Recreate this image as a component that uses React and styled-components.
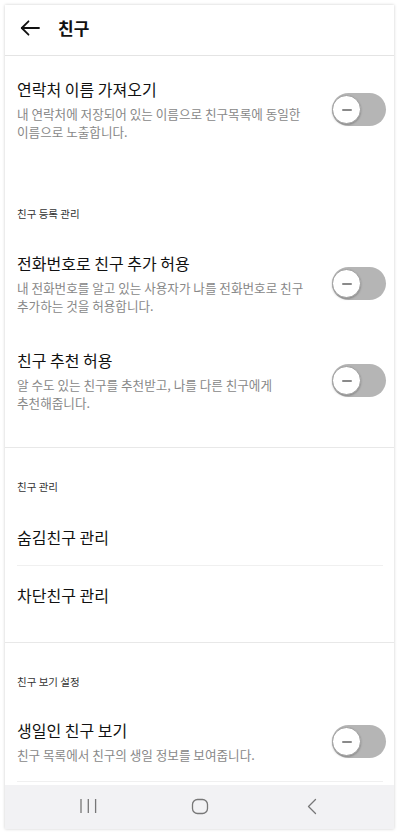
import React from "react";
import styled, { createGlobalStyle } from "styled-components";

const Global = createGlobalStyle`
  html, body { margin: 0; padding: 0; background: #ffffff; }
  body { font-family: "Noto Sans CJK KR", "Noto Sans", sans-serif; -webkit-font-smoothing: antialiased; }
  * { box-sizing: border-box; }
`;

const Page = styled.div`
  padding: 5px 6px 0 5px;
  height: 834px;
  overflow: hidden;
`;

const Card = styled.div`
  height: 824px;
  background: #fff;
  box-shadow: 0 0 3px rgba(0, 0, 0, 0.2);
  display: flex;
  flex-direction: column;
  overflow: hidden;
`;

const Header = styled.div`
  height: 51px;
  flex: none;
  display: flex;
  align-items: center;
  padding: 0 0 5px 15px;
  border-bottom: 1px solid #e4e4e4;
`;

const BackBtn = styled.div`
  width: 20px;
  height: 16px;
  display: flex;
  color: #111;
`;

const Title = styled.div`
  margin-left: 18px;
  font-size: 17px;
  font-weight: 700;
  color: #111;
  line-height: 22px;
`;

const Content = styled.div`
  flex: 1;
  overflow: hidden;
`;

const Group = styled.div`
  padding-top: ${(p) => p.$pt || 0}px;
  padding-bottom: ${(p) => p.$pb || 0}px;
  border-bottom: ${(p) => (p.$divider ? "1px solid #e8e8e8" : "none")};
`;

const Label = styled.div`
  padding: ${(p) => p.$pt}px 12px ${(p) => p.$pb}px 12px;
  font-size: 10.5px;
  line-height: 16px;
  color: #333;
`;

const Row = styled.div`
  display: flex;
  align-items: center;
  padding: 17px 8px 17px 12px;
`;

const Texts = styled.div`
  flex: 1;
  padding-right: 20px;
`;

const RowTitle = styled.div`
  font-size: 16px;
  line-height: 22px;
  color: #111;
`;

const Desc = styled.div`
  margin-top: 5px;
  font-size: 12.6px;
  line-height: 18px;
  color: #888;
  white-space: nowrap;
`;

const Track = styled.div`
  position: relative;
  flex: none;
  width: 54px;
  height: 33px;
  border-radius: 17px;
  background: #b5b5b5;
`;

const Knob = styled.div`
  position: absolute;
  left: 0;
  top: 2px;
  width: 29px;
  height: 29px;
  border-radius: 50%;
  background: #fff;
  border: 1px solid #9e9e9e;
  box-shadow: 0 1px 2px rgba(0, 0, 0, 0.25);
  display: flex;
  align-items: center;
  justify-content: center;
  &::after {
    content: "";
    width: 10px;
    height: 2px;
    border-radius: 1px;
    background: #8a8a8a;
  }
`;

const Item = styled.div`
  height: 57px;
  display: flex;
  align-items: center;
  margin: 0 11px 0 12px;
  font-size: 16px;
  color: #111;
  border-bottom: ${(p) => (p.$line ? "1px solid #f0f0f0" : "none")};
`;

const InnerLine = styled.div`
  margin: 0 11px 0 12px;
  border-bottom: 1px solid #f0f0f0;
`;

const Nav = styled.div`
  height: 44px;
  flex: none;
  background: #f2f2f4;
  display: grid;
  grid-template-columns: repeat(3, 112px);
  justify-content: center;
  align-items: center;
  justify-items: center;
  padding: 0 0 2px 0;
`;

const Toggle = () => (
  <Track>
    <Knob />
  </Track>
);

const ToggleRow = ({ title, desc }) => (
  <Row>
    <Texts>
      <RowTitle>{title}</RowTitle>
      <Desc>{desc}</Desc>
    </Texts>
    <Toggle />
  </Row>
);

export default function App() {
  return (
    <>
      <Global />
      <Page>
        <Card>
          <Header>
            <BackBtn>
              <svg width="20" height="16" viewBox="0 0 20 16" fill="none" stroke="currentColor" strokeWidth="1.8" strokeLinecap="round" strokeLinejoin="round">
                <path d="M19 8H1.8" />
                <path d="M8.5 1.3L1.8 8l6.7 6.7" />
              </svg>
            </BackBtn>
            <Title>친구</Title>
          </Header>
          <Content>
            <Group $pt={5} $pb={17}>
              <ToggleRow
                title="연락처 이름 가져오기"
                desc={<>내 연락처에 저장되어 있는 이름으로 친구목록에 동일한<br />이름으로 노출합니다.</>}
              />
            </Group>
            <Group $pb={18} $divider>
              <Label $pt={31} $pb={13}>친구 등록 관리</Label>
              <ToggleRow
                title="전화번호로 친구 추가 허용"
                desc={<>내 전화번호를 알고 있는 사용자가 나를 전화번호로 친구<br />추가하는 것을 허용합니다.</>}
              />
              <ToggleRow
                title="친구 추천 허용"
                desc={<>알 수도 있는 친구를 추천받고, 나를 다른 친구에게<br />추천해줍니다.</>}
              />
            </Group>
            <Group $pb={19} $divider>
              <Label $pt={31} $pb={14}>친구 관리</Label>
              <Item $line>숨김친구 관리</Item>
              <Item>차단친구 관리</Item>
            </Group>
            <Group>
              <Label $pt={31} $pb={12}>친구 보기 설정</Label>
              <ToggleRow
                title="생일인 친구 보기"
                desc="친구 목록에서 친구의 생일 정보를 보여줍니다."
              />
              <InnerLine />
            </Group>
          </Content>
          <Nav>
            <svg width="18" height="16" viewBox="0 0 18 16" fill="none" stroke="#777" strokeWidth="1.3">
              <path d="M2 1v14M9.3 1v14M16.6 1v14" />
            </svg>
            <svg width="18" height="17" viewBox="0 0 18 17" fill="none" stroke="#777" strokeWidth="1.3">
              <rect x="1.5" y="1.5" width="15" height="14" rx="5" />
            </svg>
            <svg width="12" height="17" viewBox="0 0 12 17" fill="none" stroke="#777" strokeWidth="1.3" strokeLinecap="round" strokeLinejoin="round">
              <path d="M9.5 1.5L2.5 8.5l7 7" />
            </svg>
          </Nav>
        </Card>
      </Page>
    </>
  );
}
